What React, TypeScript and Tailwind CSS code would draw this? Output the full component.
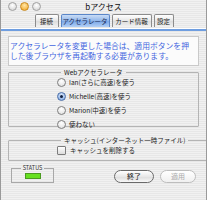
import React from 'react';

const jp = "font-['Lucida_Grande','Noto_Sans_CJK_JP',sans-serif]";

const Tab = ({ label, active = false, w }: { label: string; active?: boolean; w: string }) => (
  <div
    className={`${w} h-[13px] flex items-center justify-center rounded-t-[2px] border border-b-0 text-[6.5px] leading-none whitespace-nowrap ${
      active
        ? 'border-[#5a86c8] bg-[linear-gradient(#c9dcf6,#8fb5ea_50%,#7aa6e6_51%,#b3d0f6)] text-[#1a2a55]'
        : 'border-[#8c8c8c] bg-[linear-gradient(#ffffff,#e6e6e6_50%,#dcdcdc_51%,#f2f2f2)] text-[#222]'
    }`}
  >
    {label}
  </div>
);

const Radio = ({ label, checked = false }: { label: string; checked?: boolean }) => (
  <div className="flex items-center gap-[3px] h-[14px]">
    <span
      className={`w-[9px] h-[9px] rounded-full border flex items-center justify-center ${
        checked
          ? 'border-[#4a6ea8] bg-[radial-gradient(circle_at_50%_30%,#d7e6fb,#7ea6e0)]'
          : 'border-[#7d7d7d] bg-[radial-gradient(circle_at_50%_30%,#ffffff,#dcdcdc)]'
      }`}
    >
      {checked && <span className="w-[3px] h-[3px] rounded-full bg-[#102040]" />}
    </span>
    <span className="text-[6.5px] text-[#222] leading-none whitespace-nowrap">{label}</span>
  </div>
);

export default function App() {
  return (
    <div
      className={`${jp} w-[207px] h-[200px] overflow-hidden flex flex-col bg-[repeating-linear-gradient(#f1f1f1_0px,#f1f1f1_1px,#e7e7e7_1px,#e7e7e7_2px)] border-x border-[#9a9a9a]`}
    >
      {/* title bar */}
      <div className="h-[13px] flex items-center relative">
        <div className="absolute left-[7px] top-[2px] flex gap-[3px]">
          <span className="w-[9px] h-[9px] rounded-full border border-[#a0a0a0] bg-[radial-gradient(circle_at_50%_35%,#ffffff,#cfcfcf)]" />
          <span className="w-[9px] h-[9px] rounded-full border border-[#c88a20] bg-[radial-gradient(circle_at_50%_35%,#ffe7a8,#f3a420)]" />
          <span className="w-[9px] h-[9px] rounded-full border border-[#a0a0a0] bg-[radial-gradient(circle_at_50%_35%,#ffffff,#cfcfcf)]" />
        </div>
        <div className="flex-1 text-center text-[8px] leading-none text-[#111] pt-[1px]">bアクセス</div>
      </div>

      {/* tabs */}
      <div className="flex justify-center gap-[2px] mt-[1px] pl-[1px]">
        <Tab label="接続" w="w-[24px]" />
        <Tab label="アクセラレータ" w="w-[49px]" active />
        <Tab label="カード情報" w="w-[40px]" />
        <Tab label="設定" w="w-[20px]" />
      </div>
      <div className="h-[1px] mt-[1px] bg-white" />
      <div className="h-[2px] bg-[#6f9ee0]" />

      {/* content */}
      <div className="px-[7px] pt-[5px] flex flex-col">
        <div className="bg-[#fbfbfb] border border-[#c9c9c9] px-[1px] py-[4px] text-[7.8px] leading-[10px] whitespace-nowrap text-[#4466e0]">
          アクセラレータを変更した場合は、適用ボタンを押
          <br />
          した後ブラウザを再起動する必要があります。
        </div>

        <fieldset className="mt-[3px] border border-[#b4b4b4] rounded-[1px] px-[48px] h-[58px]">
          <legend className="ml-[4px] px-[3px] text-[6.5px] leading-none text-[#222] whitespace-nowrap">Webアクセラレータ</legend>
          <div className="flex flex-col">
            <Radio label="Ian(さらに高速)を使う" />
            <Radio label="Michelle(高速)を使う" checked />
            <Radio label="Marion(中速)を使う" />
            <Radio label="使わない" />
          </div>
        </fieldset>

        <fieldset className="mt-[10px] border border-[#b4b4b4] rounded-[1px] px-[48px] h-[24px]">
          <legend className="ml-[4px] px-[3px] text-[6.5px] leading-none text-[#222] whitespace-nowrap">キャッシュ(インターネット一時ファイル)</legend>
          <div className="flex items-center gap-[4px] pt-[2px]">
            <span className="w-[9px] h-[9px] border border-[#7d7d7d] rounded-[1px] bg-[linear-gradient(#ffffff,#dcdcdc)]" />
            <span className="text-[6.5px] leading-none text-[#222] whitespace-nowrap">キャッシュを削除する</span>
          </div>
        </fieldset>
      </div>

      {/* bottom */}
      <div className="flex items-start px-[10px] mt-[5px]">
        <fieldset className="w-[43px] h-[17px] border border-[#a8a8a8] flex justify-center">
          <legend className="mx-auto px-[2px] text-[5.5px] leading-none text-[#333]">STATUS</legend>
          <span className="mt-[1px] w-[16px] h-[6px] bg-[#66e020] border border-[#4a9a20]" />
        </fieldset>
        <div className="flex-1" />
        <div className="flex gap-[6px] mt-[4px]">
          <button className="w-[40px] h-[13px] rounded-full border border-[#6a6a6a] bg-[linear-gradient(#ffffff,#e8e8e8_50%,#dcdcdc_51%,#f8f8f8)] text-[7px] leading-none text-[#111]">
            終了
          </button>
          <button className="w-[36px] h-[13px] rounded-full border border-[#bdbdbd] bg-[linear-gradient(#ffffff,#f0f0f0)] text-[7px] leading-none text-[#aaa]">
            適用
          </button>
        </div>
      </div>
    </div>
  );
}
